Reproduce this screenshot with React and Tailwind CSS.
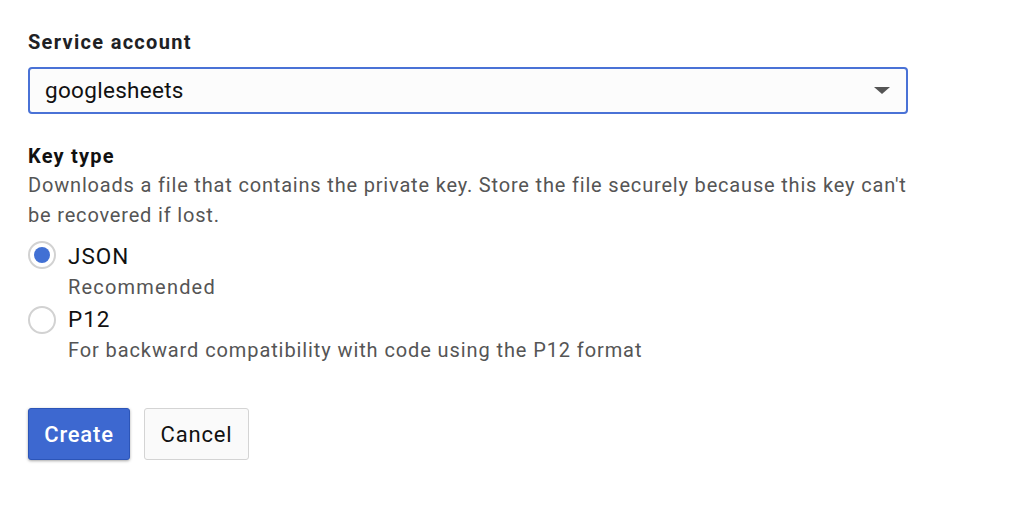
export default function App() {
  const font = { fontFamily: "Roboto, 'Noto Sans', Arial, sans-serif" };
  return (
    <div className="w-[1014px] h-[510px] bg-white" style={font}>
      <div className="w-[880px] ml-[28px] pt-[28px]">
        <div className="text-[20px] leading-[28px] font-bold tracking-[1.3px] text-[#202124]">Service account</div>
        <div className="mt-[11px] h-[47px] border-2 border-[#4a72d6] rounded-[4px] bg-[#fcfcfc] flex items-center justify-between pl-[15px] pr-[16px]">
          <span className="text-[22.5px] tracking-[0.3px] text-[#111]">googlesheets</span>
          <svg width="16" height="7" viewBox="0 0 16 7"><path d="M0 0 L16 0 L8 7 Z" fill="#555" /></svg>
        </div>
        <div className="mt-[28px] text-[20px] leading-[28px] font-bold tracking-[1.2px] text-[#111]">Key type</div>
        <div className="text-[20px] leading-[30px] tracking-[0.82px] text-[#555]">
          Downloads a file that contains the private key. Store the file securely because this key can't be recovered if lost.
        </div>
        <div className="mt-[10px] flex flex-col">
          <label className="flex items-start">
            <span className="mt-[1px] w-[28px] h-[28px] rounded-full border-2 border-[#d2d2d2] flex items-center justify-center">
              <span className="w-[16px] h-[16px] rounded-full bg-[#4170d4]" />
            </span>
            <span className="ml-[12px] flex flex-col">
              <span className="text-[22.5px] leading-[32px] tracking-[1px] text-[#111]">JSON</span>
              <span className="text-[20px] leading-[31px] tracking-[1.2px] text-[#555]">Recommended</span>
            </span>
          </label>
          <label className="flex items-start">
            <span className="mt-[3px] w-[28px] h-[28px] rounded-full border-2 border-[#d2d2d2]" />
            <span className="ml-[12px] flex flex-col">
              <span className="text-[22.5px] leading-[32px] tracking-[1px] text-[#111]">P12</span>
              <span className="text-[20px] leading-[30px] tracking-[0.9px] text-[#555]">For backward compatibility with code using the P12 format</span>
            </span>
          </label>
        </div>
        <div className="mt-[43px] flex gap-[14px]">
          <button className="w-[102px] h-[52px] rounded-[3px] bg-[#3d68d0] border border-[#2c55b8] text-white text-[22px] font-medium tracking-[0.8px] shadow-[0_1px_3px_rgba(0,0,0,0.35)]">Create</button>
          <button className="w-[105px] h-[52px] rounded-[3px] bg-[#fafafa] border border-[#d4d4d4] text-[#111] text-[22px] tracking-[0.8px]">Cancel</button>
        </div>
      </div>
    </div>
  );
}
